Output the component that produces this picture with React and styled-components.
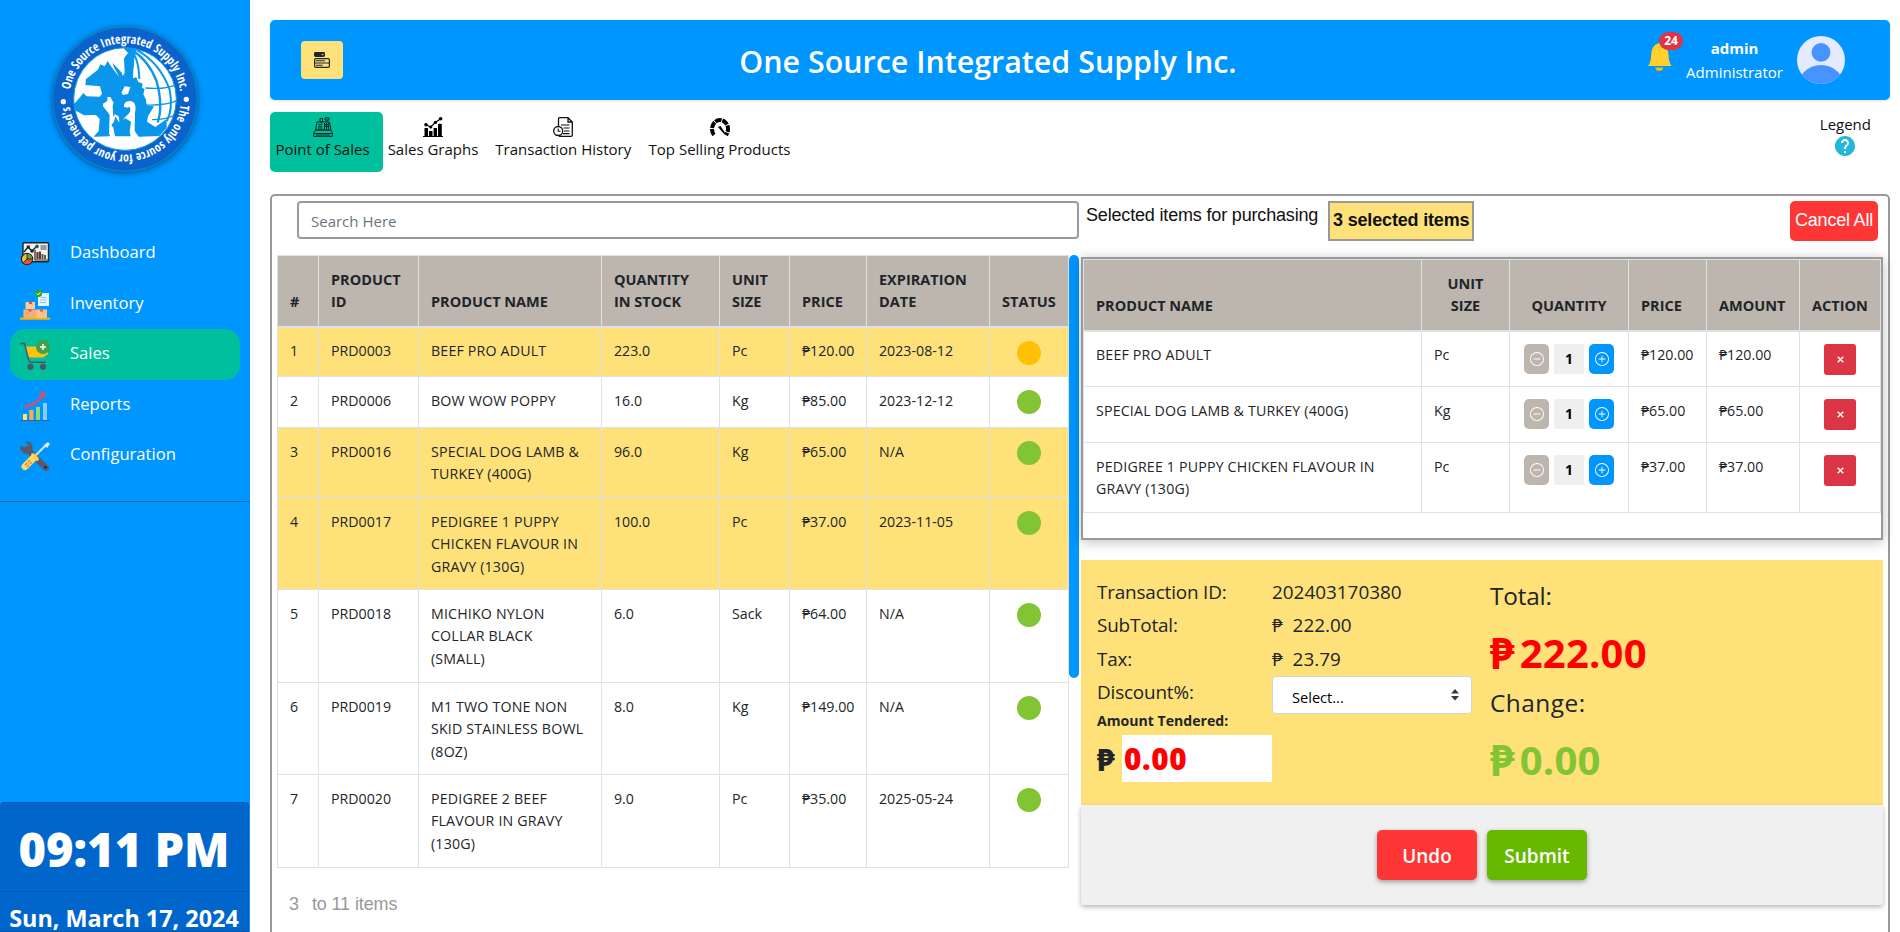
import React from "react";
import styled, { createGlobalStyle, css } from "styled-components";
import { BsPlusCircle, BsDashCircle } from "react-icons/bs";
import { MdHelp } from "react-icons/md";

const blue = "#0096ff";
const yellow = "#ffe17a";
const taupe = "#bcb6af";
const grey = "#999999";
const ui = `"Open Sans", "Noto Sans", sans-serif`;
const arial = `"Liberation Sans", Arial, sans-serif`;

const GlobalStyle = createGlobalStyle`
  * { box-sizing: border-box; }
  html, body { margin: 0; height: 932px; overflow: hidden; background: #fff; }
  body { font-family: ${ui}; color: #212529; }
  button, input { font-family: inherit; }
`;

const Page = styled.div`
  display: flex;
  width: 1900px;
  height: 932px;
  overflow: hidden;
`;

/* Sidebar */
const Sidebar = styled.aside`
  display: flex;
  flex-direction: column;
  width: 250px;
  height: 932px;
  background: ${blue};
`;
const Brand = styled.div`
  height: 228px;
  padding: 18px 0 0 45px;
  svg { display: block; width: 160px; height: 160px; overflow: visible; }
`;
const Menu = styled.nav`
  display: flex;
  flex-direction: column;
  padding: 0 10px 20px;
  border-bottom: 1px solid rgba(60, 70, 80, 0.55);
  height: 274px;
`;
const MenuItem = styled.a`
  display: flex;
  height: 50.6px;
  padding: 11px 10px 0;
  gap: 20px;
  border-radius: 15px;
  color: #fff;
  font-size: 16.6px;
  line-height: 25px;
  background: ${(p) => (p.$active ? "#00bf9c" : "transparent")};
  svg { width: 30px; height: 30px; flex: none; }
`;
const Clock = styled.div`
  margin-top: auto;
  width: 249px;
  height: 130px;
  background: #0066cc;
  border: 1px solid #0059b3;
  border-left: 0;
  border-radius: 4px 4px 0 0;
  color: #fff;
  text-align: center;
  white-space: nowrap;
`;
const Time = styled.div`
  height: 89px;
  line-height: 92px;
  font-size: 47px;
  font-weight: 800;
  border-bottom: 1px solid #0059b3;
`;
const DateLine = styled.div`
  padding-top: 8px;
  font-size: 23.4px;
  font-weight: 700;
  line-height: 36px;
`;

/* Header */
const Main = styled.main`
  display: flex;
  flex-direction: column;
  width: 1650px;
  padding: 20px 10px 0 20px;
`;
const TopBar = styled.header`
  display: grid;
  grid-template-columns: 286px 1fr 400px;
  flex: none;
  height: 80px;
  align-items: center;
  padding: 0 45px 0 31px;
  background: ${blue};
  border-radius: 5px;
  box-shadow: 0 1px 3px rgba(0, 0, 0, 0.12);
`;
const ToggleButton = styled.button`
  display: grid;
  place-items: center;
  width: 42px;
  height: 38px;
  border: 0;
  border-radius: 4px;
  background: ${yellow};
`;
const Title = styled.h1`
  margin: 4px 56px 0 0;
  color: #fff;
  text-align: center;
  font-size: 30.4px;
  line-height: 42px;
  font-weight: 600;
`;
const Account = styled.div`
  display: flex;
  justify-content: flex-end;
  align-items: center;
  color: #fff;
`;
const Bell = styled.div`
  position: relative;
  width: 26px;
  height: 28px;
  margin: -6px 13px 0 0;
  svg { display: block; }
`;
const Badge = styled.span`
  position: absolute;
  left: 12px;
  top: -11px;
  width: 24px;
  height: 18px;
  border-radius: 9px;
  background: #dc3545;
  font-size: 12px;
  font-weight: 700;
  line-height: 18px;
  text-align: center;
`;
const UserName = styled.div`
  width: 97px;
  margin-right: 14px;
  font-size: 15px;
  line-height: 24px;
  text-align: center;
  white-space: nowrap;
`;

/* Tabs */
const TabBar = styled.div`
  display: flex;
  justify-content: space-between;
  flex: none;
  height: 60px;
  margin: 12px 0 22px;
`;
const Tabs = styled.div`display: flex;`;
const Tab = styled.a`
  display: flex;
  flex-direction: column;
  align-items: center;
  width: ${(p) => p.$width}px;
  padding: 5px 13px 0 5px;
  border-radius: 5px;
  background: ${(p) => (p.$active ? "#00bf9c" : "transparent")};
  color: #111;
  font-size: 15px;
  line-height: 25px;
  white-space: nowrap;
  svg { width: 20px; height: 20px; flex: none; }
`;
const Legend = styled.div`
  display: flex;
  flex-direction: column;
  align-items: center;
  margin-right: 19px;
  color: #111;
  font-size: 15px;
  line-height: 24px;
  svg { margin-top: -2px; color: #23b7d9; }
`;

/* Work area */
const Panel = styled.section`
  display: flex;
  flex: none;
  height: 780px;
  border: 2px solid ${grey};
  border-radius: 5px;
`;
const Stock = styled.div`width: 809px;`;
const Checkout = styled.div`width: 802px;`;
const Search = styled.input`
  display: block;
  width: 782px;
  height: 38px;
  margin: 5px 0 16px 25px;
  padding: 2px 12px 0;
  border: 2px solid ${grey};
  border-radius: 4px;
  font-size: 15px;
  background: #fff;
  &::placeholder { color: #6c757d; opacity: 1; }
`;
const ScrollArea = styled.div`
  display: flex;
  height: 613px;
  padding-left: 5px;
  overflow: hidden;
`;
const ScrollThumb = styled.div`
  width: 10px;
  height: 423px;
  border-radius: 5px;
  background: ${blue};
`;
const Table = styled.table`
  width: ${(p) => p.$width}px;
  height: max-content;
  border-collapse: collapse;
  table-layout: fixed;
  font-size: 14.2px;
  line-height: ${(p) => p.$line || 22.5}px;
`;
const Th = styled.th`
  height: ${(p) => p.$height}px;
  padding: 0 12px ${(p) => p.$bottom}px;
  border: 1px solid #dee2e6;
  border-bottom-width: 2px;
  background: ${taupe};
  text-align: ${(p) => (p.$center ? "center" : "left")};
  vertical-align: bottom;
  font-weight: 700;
  font-size: 14.5px;
  letter-spacing: 0;
  white-space: pre-line;
`;
const Td = styled.td`
  height: ${(p) => p.$height}px;
  padding: ${(p) => (p.$center ? "12px 0 0" : "12.6px 0 0 12px")};
  border: 1px solid #dee2e6;
  text-align: ${(p) => (p.$center ? "center" : "left")};
  vertical-align: top;
  white-space: pre;
  letter-spacing: ${(p) => (p.$wide ? "0.18px" : "0")};
`;
const Tr = styled.tr`
  background: ${(p) => (p.$selected ? yellow : "#fff")};
`;
const Status = styled.i`
  display: inline-block;
  width: 24px;
  height: 24px;
  margin-top: 1px;
  border-radius: 50%;
  background: ${(p) => (p.$warn ? "#ffc107" : "#82c434")};
`;
const Count = styled.div`
  display: flex;
  gap: 13px;
  padding: 25px 0 0 17px;
  color: ${grey};
  font-family: ${arial};
  font-size: 18px;
  line-height: 22px;
  letter-spacing: -0.12px;
`;

const CartTop = styled.div`
  display: flex;
  height: 40px;
  margin: 5px 5px 16px;
  font-family: ${arial};
  font-size: 18px;
  line-height: 28px;
  color: #111;
  letter-spacing: -0.17px;
`;
const Selected = styled.strong`
  width: 146px;
  height: 40px;
  margin-left: 10px;
  border: 2px solid ${grey};
  background: ${yellow};
  text-align: center;
  line-height: 35px;
  letter-spacing: -0.17px;
`;
const CancelAll = styled.button`
  width: 88px;
  margin-left: auto;
  padding: 0 0 2px;
  border: 0;
  border-radius: 5px;
  background: #ff3636;
  color: #fff;
  font-family: ${arial};
  font-size: 18px;
  letter-spacing: -0.2px;
`;
const CartBox = styled.div`
  height: 283px;
  border: 2px solid ${grey};
  box-shadow: 0 2px 12px rgba(0, 0, 0, 0.25);
  background: #fff;
`;
const Stepper = styled.div`
  display: flex;
  justify-content: center;
  gap: 5px;
`;
const StepButton = styled.button`
  display: grid;
  place-items: center;
  width: 25px;
  height: 30px;
  padding: 0;
  border: 0;
  border-radius: 5px;
  color: #fff;
  background: ${(p) => (p.$add ? blue : taupe)};
`;
const Amount = styled.span`
  width: 30px;
  height: 30px;
  background: #efefef;
  color: #000;
  font-size: 14px;
  font-weight: 700;
  line-height: 30px;
  text-align: center;
`;
const Remove = styled.button`
  display: inline-grid;
  place-items: center;
  width: 32px;
  height: 31px;
  padding: 0;
  border: 0;
  border-radius: 3px;
  background: #dc3545;
`;

/* Payment summary */
const Summary = styled.div`
  display: flex;
  height: 245px;
  margin-top: 20px;
  padding: 16px 16px 0;
  background: ${yellow};
`;
const Labels = styled.div`width: 175px;`;
const Values = styled.div`
  width: 200px;
  margin-right: 18px;
`;
const Line = styled.div`
  height: 33.3px;
  font-size: 18.9px;
  line-height: 32px;
  white-space: pre;
  letter-spacing: ${(p) => (p.$label ? "-0.17px" : "0")};
`;
const TenderedLabel = styled.div`
  height: 26px;
  font-size: 14.1px;
  line-height: 23px;
  font-weight: 700;
`;
const Tendered = styled.div`
  display: flex;
  font-size: 29px;
  line-height: 47px;
  font-weight: 800;
`;
const Peso = styled.span`
  width: 25px;
  font-size: 31px;
  line-height: 49px;
`;
const TenderInput = styled.div`
  width: 150px;
  height: 47px;
  padding-left: 2px;
  background: #fff;
  color: #f00;
  font-size: 29.6px;
  letter-spacing: 0.7px;
  line-height: 47px;
`;
const Select = styled.div`
  display: flex;
  justify-content: space-between;
  height: 38px;
  padding: 1px 11px 0 19px;
  border: 1px solid #ced4da;
  border-radius: 4px;
  background: #fff;
  color: #000;
  font-size: 14.6px;
  line-height: 38px;
  svg { margin-top: 11px; }
`;
const TotalLabel = styled.div`
  font-size: 24.4px;
  line-height: ${(p) => p.$line}px;
  font-weight: 500;
  letter-spacing: ${(p) => p.$spacing || 0}px;
`;
const TotalValue = styled.div`
  display: flex;
  gap: 5px;
  color: ${(p) => p.$color};
  font-size: 40px;
  font-weight: 700;
  line-height: 73px;
  height: 72px;
  letter-spacing: 0.2px;
  ${(p) => p.$low && css`padding-top: 5px;`}
  span:first-child { font-size: 43px; }
`;
const Actions = styled.div`
  display: flex;
  justify-content: center;
  gap: 10px;
  height: 100px;
  padding-top: 25px;
  border-radius: 3px;
  background: #f0f0f0;
  box-shadow: 0 2px 5px rgba(0, 0, 0, 0.3);
`;
const ActionButton = styled.button`
  width: 100px;
  height: 50px;
  padding: 1px 0 0;
  border: 0;
  border-radius: 5px;
  background: ${(p) => p.$color};
  box-shadow: 0 2px 5px rgba(0, 0, 0, 0.35);
  color: #fff;
  font-size: 19px;
  font-weight: 600;
`;

const Logo = () => (
  <svg viewBox="135 55 480 480">
    <defs>
      <filter id="soft" x="-20%" y="-20%" width="140%" height="140%">
        <feGaussianBlur stdDeviation="9" />
      </filter>
      <clipPath id="disc"><circle cx="375" cy="298" r="154" /></clipPath>
      <path id="ring" d="M375 465A167 167 0 1 1 375.1 465" />
    </defs>
    <circle cx="375" cy="302" r="218" fill="#003a70" opacity=".75" filter="url(#soft)" />
    <circle cx="375" cy="298" r="216" fill="#0a62cc" stroke="#0a84c4" strokeWidth="4" />
    <circle cx="375" cy="298" r="154" fill="#fff" stroke="#0a9ad0" strokeWidth="3" />
    <g clipPath="url(#disc)" fill="#0a96ea">
      <path d="M366 140L450 140L440 158L410 152L404 172L399 235L409 232L414 246L428 252L426 264L434 268L430 284L438 300L440 318L462 320L444 350L441 366L466 382L500 358L500 384L478 409L416 411L404 394L405 340Q412 303 388 304Q370 306 372 322L384 324Q388 317 391 327Q393 338 378 350Q362 366 360 382L356 350L345 344L340 352L338 320L341 310L331 292L322 292L322 304L309 312L309 320L322 336L329 346L327 400L330 410L281 411L296 394L299 358L288 346L252 347L222 330L218 318L240 293L250 280L260 290L299 291L306 282L300 260L256 256L258 238L294 210L301 194L314 200L323 184L334 201L344 214L338 190L366 220L366 228L374 220L372 176L384 160Z" />
      <path d="M346 350L357 368L376 356L393 366L389 397L392 410L345 410L340 384L334 376L342 366Z" />
      <path fill="#fff" d="M365 278L374 260L391 262L384 283L368 286Z" />
      <path fill="#fff" d="M334 188L343 213L358 232L346 210ZM357 199L374 230L362 190Z" />
      <path fill="#fff" d="M446 367L458 337L468 350L460 376Z" />
      <path fill="#fff" d="M404 172L399 235L409 232L414 240Q420 200 404 172ZM410 154Q436 190 438 300L468 300Q460 200 410 154Z" />
      <g fill="none" stroke="#0a96ea" strokeWidth="6">
        <path d="M388 150Q416 168 418 238" />
        <path strokeWidth="7" d="M394 150Q445 180 470 245Q490 320 473 368" />
        <path d="M412 152Q480 190 509 270Q520 330 500 365" />
        <path strokeWidth="4" d="M436 265Q500 270 530 254M436 316Q500 318 530 303M456 360Q500 360 530 344" />
      </g>
    </g>
    <g fill="#fff" fontFamily="'Liberation Sans Narrow','Open Sans Condensed','Liberation Sans',sans-serif" fontSize="38">
      <text><textPath href="#ring" startOffset="290" textLength="474" lengthAdjust="spacingAndGlyphs">One Source Integrated Supply Inc.</textPath></text>
      <g transform="rotate(180 375 298)">
        <text><textPath href="#ring" startOffset="279" textLength="485" lengthAdjust="spacingAndGlyphs">The only source for your pet need's</textPath></text>
      </g>
      <circle cx="190" cy="306" r="8" /><circle cx="559" cy="299" r="8" />
    </g>
  </svg>
);

const DashboardIcon = () => (
  <svg viewBox="0 0 30 30">
    <rect x="3" y="3.7" width="25.5" height="19" rx="1" fill="#f3f3f3" stroke="#222" strokeWidth="1.4" />
    <path d="M4 13L8 8L12 12L17 7" fill="none" stroke="#222" strokeWidth="1.4" />
    <rect x="6.8" y="6.5" width="3" height="3" fill="#222" /><circle cx="12" cy="12" r="1.8" fill="#222" /><circle cx="17" cy="7.4" r="1.8" fill="#1e5a74" />
    <rect x="20.5" y="6" width="6" height="5" fill="#999" />
    <path d="M15 11V21H28" fill="none" stroke="#222" strokeWidth="1.2" />
    <path d="M17.5 20V13" stroke="#803333" strokeWidth="2.3" /><path d="M20 20V12.5" stroke="#444" strokeWidth="2" /><path d="M22.5 20V15" stroke="#804d26" strokeWidth="2" /><path d="M25 20V16" stroke="#3d7235" strokeWidth="2" />
    <circle cx="7" cy="20" r="5.6" fill="#f3bf32" stroke="#222" strokeWidth="1.2" />
    <path d="M7 20V14.8A5.3 5.3 0 0 1 12.2 20Z" fill="#51a843" /><path d="M7 20H12.2A5.3 5.3 0 0 1 3.5 24Z" fill="#ef4a38" />
    <path d="M7 14.5V20H12.5M7 20L3.4 23.5" fill="none" stroke="#222" strokeWidth=".9" />
  </svg>
);
const InventoryIcon = () => (
  <svg viewBox="0 0 30 30">
    <path d="M18 3H29V16H18Z" fill="#e2f2ff" /><path d="M21 7.5H26M20 10H26M20 12.5H26" stroke="#8bc7f4" strokeWidth="1.1" />
    <circle cx="18.5" cy="3.5" r="3.6" fill="#31a51b" /><path d="M16.8 3.4L18.2 4.8L20.4 2.3" fill="none" stroke="#fff" strokeWidth="1" />
    <path d="M5.5 12H15V19H5.5Z" fill="#ffc89a" /><path d="M3.4 19.5H16V28H3.4Z" fill="#f8ad72" /><path d="M16 19.5H27V28H16Z" fill="#ffc08a" />
    <path d="M9 12H12V14H9ZM8.5 19.5H11.5V21.5H8.5ZM20 19.5H23V21.5H20Z" fill="#ec4b4b" />
    <path d="M0 28.7H30" stroke="#ffb400" strokeWidth="2" />
  </svg>
);
const CartIcon = () => (
  <svg viewBox="0 0 30 30">
    <path d="M5 6.5H27L28 14L23 17.5H8.2Z" fill="#ffc20e" />
    <path d="M.5 3.5H4.5L8.8 20.5Q9 22.3 11 22.3H26" fill="none" stroke="#455a64" strokeWidth="1.5" />
    <circle cx="10.5" cy="26.8" r="3.1" fill="#455a64" /><circle cx="23" cy="26.8" r="3.1" fill="#455a64" />
    <circle cx="23" cy="7" r="7" fill="#43a047" /><path d="M20 7H26M23 4V10" stroke="#fff" strokeWidth="1.5" />
  </svg>
);
const ReportsIcon = () => (
  <svg viewBox="0 0 30 30">
    <path d="M3 23H7V29H3Z" fill="#ffe074" /><path d="M9.3 19H13.5V29H9.3Z" fill="#ffa84c" /><path d="M16 16H20V29H16Z" fill="#8edb78" /><path d="M23 12H27V29H23Z" fill="#8dc8ff" />
    <path d="M0 29.5H30" stroke="#3a5f80" />
    <path d="M4 14.5Q15 13 21 5L18.5 3.5L24.5 0L25 7L23 6Q15 16 4 16.5Z" fill="#f4435c" />
  </svg>
);
const ToolsIcon = () => (
  <svg viewBox="0 0 30 30">
    <path d="M7 8L26 27" stroke="#5a5968" strokeWidth="6" strokeLinecap="round" />
    <path d="M5 .5L10 1Q14 5 12 10Q8 14 3 12L0 8L1 4L6 8L9 5Z" fill="#5a5968" />
    <circle cx="25.5" cy="26.3" r="1.3" fill="#25252f" />
    <path d="M14 16L26 4" stroke="#d8e2f5" strokeWidth="2" /><path d="M24 4L28 1L30 3L27 7Z" fill="#e9effb" />
    <path d="M13 14L17 18" stroke="#ffb94a" strokeWidth="4" strokeLinecap="round" />
    <path d="M5 25.5L13 17.5" stroke="#ffd766" strokeWidth="7" strokeLinecap="round" />
    <path d="M5 24L10.5 18.5M7 26L12.5 20.5" stroke="#ee6a4d" strokeWidth="1.1" strokeDasharray="3 1" />
  </svg>
);
const ListIcon = () => (
  <svg width="16" height="16" viewBox="0 0 16 16">
    <rect width="11" height="5" rx="1.4" fill="#212529" /><path d="M7.3 2L9.7 2L8.5 3.6Z" fill={yellow} />
    <rect x=".6" y="6.6" width="14.8" height="8.8" rx="1.4" fill="none" stroke="#212529" strokeWidth="1.2" />
    <path d="M1 11H15M2 8.8H11M2 13.2H8.5" stroke="#212529" strokeWidth="1.1" />
  </svg>
);
const BellIcon = () => (
  <svg width="26" height="28" viewBox="0 0 26 28">
    <path d="M12 0C6 2 4.2 7 4.2 12Q4.2 19 1 23H24.5Q21.6 19 21.5 12C21 5 18 1 12 0Z" fill="#ffd02b" />
    <path d="M8.5 24.5H16Q16 28 12.3 28Q8.5 28 8.5 24.5Z" fill="#ffb800" />
  </svg>
);
const AvatarIcon = () => (
  <svg width="48" height="48" viewBox="0 0 48 48">
    <clipPath id="face"><circle cx="24" cy="24" r="24" /></clipPath>
    <g clipPath="url(#face)">
      <rect width="48" height="48" fill="#e4eaff" />
      <circle cx="24" cy="16.3" r="9.4" fill="#4793ff" /><circle cx="24" cy="53" r="24" fill="#4793ff" />
    </g>
  </svg>
);
const RegisterIcon = () => (
  <svg viewBox="0 0 20 20" fill="none" stroke="#0a2b25" strokeWidth="1">
    <path d="M12 .8H16V3H12ZM14 3V5M7 1.5H9.5V5H7ZM4 5H16.5L18 13H2.5Z" />
    <path d="M1 15.5L2.7 13H17.5L19.3 15.5V19.4H.7V15.5ZM.7 16.5H19.3M3 18H17" />
    <path d="M5.5 7.3H9.3M5 9.3H9.2M4.8 11H9.2M11.5 6V12M13.5 6V12M15.4 6V12M11 7.5H16M11 9.5H16.5" />
  </svg>
);
const GraphIcon = () => (
  <svg viewBox="0 0 20 20">
    <path d="M0 19.5H20M3.2 19V11.5M7.7 19V14.5M12.2 19V11M16.8 19V6.5" stroke="#000" strokeWidth="1" />
    <path d="M1.5 11H5V19H1.5ZM6 14H9.5V19H6ZM10.6 11H14V19H10.6ZM15 7H18.8V19H15Z" />
    <path d="M3 7.7L7.7 10L12.4 5.4L17.6 1.8" fill="none" stroke="#000" strokeWidth="1.2" />
    <circle cx="3" cy="7.7" r="1.8" /><circle cx="7.7" cy="10" r="1.6" /><circle cx="12.4" cy="5.4" r="1.6" /><circle cx="17.6" cy="1.8" r="1.8" />
  </svg>
);
const HistoryIcon = () => (
  <svg viewBox="0 0 20 20" fill="none" stroke="#111" strokeWidth="1.3">
    <path d="M5.5 9V2Q5.5 .7 6.8 .7H15L19.3 5V18Q19.3 19.3 18 19.3H6M15 .7V5H19" />
    <circle cx="5.2" cy="14" r="4.5" /><path d="M5.2 11.5V14.2H7.5M8 8H16.5M10.5 11H16.5M11 14H16.5M10 16.6H16.5" strokeWidth="1.1" />
  </svg>
);
const GaugeIcon = () => (
  <svg viewBox="0 0 20 20">
    <path d="M4 18A8 9 0 1 1 16 18" fill="none" stroke="#000" strokeWidth="4" strokeDasharray="6.4 .9" />
    <path d="M8 10L10.5 9L16.5 18L14 17Z" />
  </svg>
);

const menu = [
  ["Dashboard", DashboardIcon],
  ["Inventory", InventoryIcon],
  ["Sales", CartIcon],
  ["Reports", ReportsIcon],
  ["Configuration", ToolsIcon],
];
const tabs = [
  ["Point of Sales", RegisterIcon, 113],
  ["Sales Graphs", GraphIcon, 108],
  ["Transaction History", HistoryIcon, 152.5],
  ["Top Selling Products", GaugeIcon, 160],
];
const stockColumns = [
  ["#", 41], ["PRODUCT\nID", 100], ["PRODUCT NAME", 183], ["QUANTITY\nIN STOCK", 118],
  ["UNIT\nSIZE", 70], ["PRICE", 77], ["EXPIRATION\nDATE", 123], ["STATUS", 79],
];
const stock = [
  ["PRD0003", "BEEF PRO ADULT", "223.0", "Pc", "₱120.00", "2023-08-12", 50, true, true],
  ["PRD0006", "BOW WOW POPPY", "16.0", "Kg", "₱85.00", "2023-12-12", 51],
  ["PRD0016", "SPECIAL DOG LAMB &\nTURKEY (400G)", "96.0", "Kg", "₱65.00", "N/A", 70, true],
  ["PRD0017", "PEDIGREE 1 PUPPY\nCHICKEN FLAVOUR IN\nGRAVY (130G)", "100.0", "Pc", "₱37.00", "2023-11-05", 92, true],
  ["PRD0018", "MICHIKO NYLON\nCOLLAR BLACK\n(SMALL)", "6.0", "Sack", "₱64.00", "N/A", 93],
  ["PRD0019", "M1 TWO TONE NON\nSKID STAINLESS BOWL\n(8OZ)", "8.0", "Kg", "₱149.00", "N/A", 92],
  ["PRD0020", "PEDIGREE 2 BEEF\nFLAVOUR IN GRAVY\n(130G)", "9.0", "Pc", "₱35.00", "2025-05-24", 93],
];
const cartColumns = [
  ["PRODUCT NAME", 338], ["UNIT\nSIZE", 88, true], ["QUANTITY", 119, true],
  ["PRICE", 78], ["AMOUNT", 93], ["ACTION", 81],
];
const cart = [
  ["BEEF PRO ADULT", "Pc", "₱120.00", 56],
  ["SPECIAL DOG LAMB & TURKEY (400G)", "Kg", "₱65.00", 56],
  ["PEDIGREE 1 PUPPY CHICKEN FLAVOUR IN\nGRAVY (130G)", "Pc", "₱37.00", 70],
];

export default function App() {
  return (
    <Page>
      <GlobalStyle />
      <Sidebar>
        <Brand><Logo /></Brand>
        <Menu>
          {menu.map(([label, Icon]) => (
            <MenuItem key={label} $active={label === "Sales"}><Icon />{label}</MenuItem>
          ))}
        </Menu>
        <Clock>
          <Time>09:11 PM</Time>
          <DateLine>Sun, March 17, 2024</DateLine>
        </Clock>
      </Sidebar>
      <Main>
        <TopBar>
          <ToggleButton><ListIcon /></ToggleButton>
          <Title>One Source Integrated Supply Inc.</Title>
          <Account>
            <Bell><BellIcon /><Badge>24</Badge></Bell>
            <UserName><b>admin</b><br />Administrator</UserName>
            <AvatarIcon />
          </Account>
        </TopBar>
        <TabBar>
          <Tabs>
            {tabs.map(([label, Icon, width], i) => (
              <Tab key={label} $width={width} $active={i === 0}><Icon />{label}</Tab>
            ))}
          </Tabs>
          <Legend>Legend<MdHelp size={24} /></Legend>
        </TabBar>
        <Panel>
          <Stock>
            <Search placeholder="Search Here" />
            <ScrollArea>
              <Table $width={792}>
                <colgroup>{stockColumns.map(([name, w]) => <col key={name} width={w} />)}</colgroup>
                <thead>
                  <tr>{stockColumns.map(([name]) => <Th key={name} $height={71} $bottom={12}>{name}</Th>)}</tr>
                </thead>
                <tbody>
                  {stock.map(([id, name, qty, unit, price, date, height, selected, warn], i) => (
                    <Tr key={id} $selected={selected}>
                      <Td $height={height}>{i + 1}</Td>
                      <Td>{id}</Td>
                      <Td $wide>{name}</Td>
                      <Td>{qty}</Td>
                      <Td>{unit}</Td>
                      <Td>{price}</Td>
                      <Td>{date}</Td>
                      <Td $center><Status $warn={warn} /></Td>
                    </Tr>
                  ))}
                </tbody>
              </Table>
              <ScrollThumb />
            </ScrollArea>
            <Count><span>3</span><span>to 11 items</span></Count>
          </Stock>
          <Checkout>
            <CartTop>
              Selected items for purchasing
              <Selected>3 selected items</Selected>
              <CancelAll>Cancel All</CancelAll>
            </CartTop>
            <CartBox>
              <Table $width={798} $line={22}>
                <colgroup>{cartColumns.map(([name, w]) => <col key={name} width={w} />)}</colgroup>
                <thead>
                  <tr>{cartColumns.map(([name, , center]) => <Th key={name} $height={71} $bottom={13} $center={center}>{name}</Th>)}</tr>
                </thead>
                <tbody>
                  {cart.map(([name, unit, price, height]) => (
                    <Tr key={name}>
                      <Td $height={height} $wide>{name}</Td>
                      <Td>{unit}</Td>
                      <Td $center>
                        <Stepper>
                          <StepButton><BsDashCircle size={14} /></StepButton>
                          <Amount>1</Amount>
                          <StepButton $add><BsPlusCircle size={14} /></StepButton>
                        </Stepper>
                      </Td>
                      <Td>{price}</Td>
                      <Td>{price}</Td>
                      <Td $center>
                        <Remove>
                          <svg width="7" height="7" viewBox="0 0 7 7"><path d="M.7 .7L6.3 6.3M6.3 .7L.7 6.3" stroke="#fff" strokeWidth="1.4" /></svg>
                        </Remove>
                      </Td>
                    </Tr>
                  ))}
                </tbody>
              </Table>
            </CartBox>
            <Summary>
              <Labels>
                <Line $label>Transaction ID:</Line>
                <Line $label>SubTotal:</Line>
                <Line $label>Tax:</Line>
                <Line $label>Discount%:</Line>
                <TenderedLabel>Amount Tendered:</TenderedLabel>
                <Tendered><Peso>₱</Peso><TenderInput>0.00</TenderInput></Tendered>
              </Labels>
              <Values>
                <Line>202403170380</Line>
                <Line>{"₱  222.00"}</Line>
                <Line>{"₱  23.79"}</Line>
                <Select>
                  Select...
                  <svg width="10" height="12" viewBox="0 0 10 12" fill="#343a40"><path d="M5 0L9 4.6H1ZM5 11.5L9 7H1Z" /></svg>
                </Select>
              </Values>
              <div>
                <TotalLabel $line={40} $spacing={-0.2}>Total:</TotalLabel>
                <TotalValue $color="#ff0000"><span>₱</span><span>222.00</span></TotalValue>
                <TotalLabel $line={30} $spacing={0.5}>Change:</TotalLabel>
                <TotalValue $color="#82c434" $low><span>₱</span><span>0.00</span></TotalValue>
              </div>
            </Summary>
            <Actions>
              <ActionButton $color="#ff3636">Undo</ActionButton>
              <ActionButton $color="#66b800">Submit</ActionButton>
            </Actions>
          </Checkout>
        </Panel>
      </Main>
    </Page>
  );
}
